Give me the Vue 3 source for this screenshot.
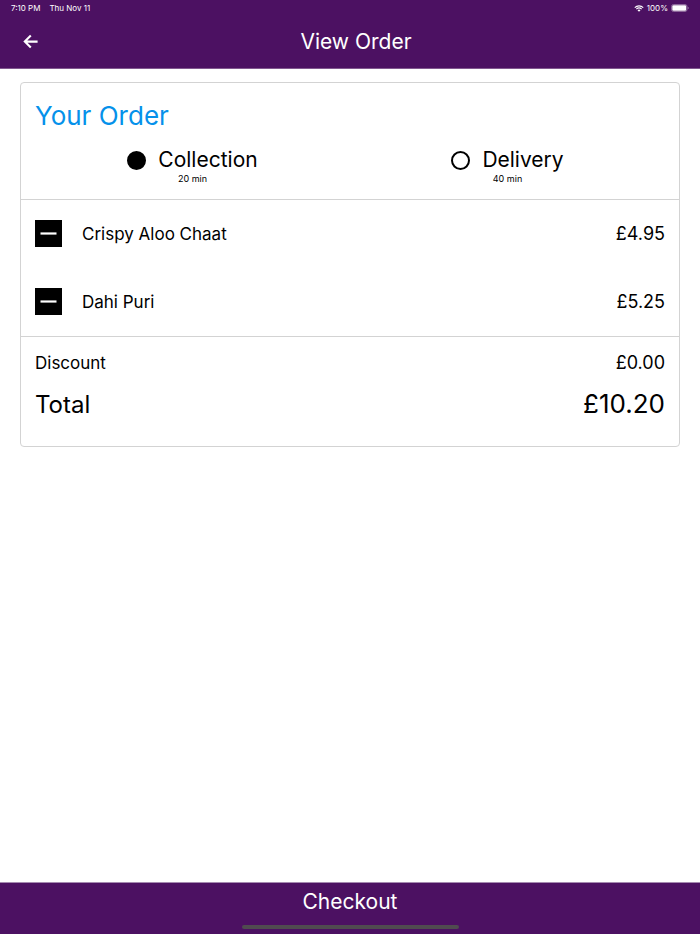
<script setup>
import { computed, ref } from 'vue'

const method = ref('collection')
const methods = [
  { id: 'collection', label: 'Collection', time: '20 min' },
  { id: 'delivery', label: 'Delivery', time: '40 min' },
]
const items = ref([
  { id: 1, name: 'Crispy Aloo Chaat', price: 4.95 },
  { id: 2, name: 'Dahi Puri', price: 5.25 },
])
const discount = ref(0)
const total = computed(() => items.value.reduce((sum, item) => sum + item.price, 0) - discount.value)
const money = (value) => '£' + value.toFixed(2)
const remove = (id) => {
  items.value = items.value.filter((item) => item.id !== id)
}
</script>

<template>
  <div class="screen">
    <header class="top">
      <div class="status">
        <div class="status-side">
          <span>7:10 PM</span>
          <span>Thu Nov 11</span>
        </div>
        <div class="status-side power">
          <svg class="wifi" viewBox="0 0 20 14" aria-hidden="true">
            <path d="M1.5 5.2a12.4 12.4 0 0 1 17 0M4.7 8.3a7.8 7.8 0 0 1 10.6 0" fill="none" stroke="#fff" stroke-width="2.3" />
            <path d="M10 13.5 7 10.6a4.4 4.4 0 0 1 6 0z" fill="#fff" />
          </svg>
          <span>100%</span>
          <svg class="battery" viewBox="0 0 36 16" aria-hidden="true">
            <rect x="1" y="1" width="31" height="14" rx="4" fill="none" stroke="#a78bb3" stroke-width="1.4" />
            <rect x="2.6" y="2.6" width="27.8" height="10.8" rx="2.4" fill="#fff" />
            <path d="M33.6 5.4a2.8 2.8 0 0 1 0 5.2z" fill="#a78bb3" />
          </svg>
        </div>
      </div>
      <nav class="bar">
        <button class="back" type="button" aria-label="Back">
          <svg viewBox="0 0 18 18" aria-hidden="true">
            <path d="M15.6 8.6H3.2M8.8 2.6 2.8 8.6l6 6" fill="none" stroke="#fff" stroke-width="2.1" />
          </svg>
        </button>
        <h1>View Order</h1>
      </nav>
    </header>

    <main class="content">
      <section class="card">
        <div class="intro">
          <h2>Your Order</h2>
          <div class="methods" role="radiogroup" aria-label="Order method">
            <label v-for="m in methods" :key="m.id" class="method">
              <span class="choice">
                <input v-model="method" type="radio" name="method" :value="m.id" />
                <span>{{ m.label }}</span>
              </span>
              <span class="time">{{ m.time }}</span>
            </label>
          </div>
        </div>

        <ul class="items">
          <li v-for="item in items" :key="item.id">
            <button class="minus" type="button" :aria-label="'Remove ' + item.name" @click="remove(item.id)">
              <svg viewBox="0 0 27 27" aria-hidden="true">
                <path d="M5.5 13.5h16" stroke="#fff" stroke-width="2.2" />
              </svg>
            </button>
            <span class="name">{{ item.name }}</span>
            <span>{{ money(item.price) }}</span>
          </li>
        </ul>

        <div class="summary">
          <div class="line">
            <span class="name-text">Discount</span>
            <span>{{ money(discount) }}</span>
          </div>
          <div class="line total">
            <span class="total-text">Total</span>
            <span>{{ money(total) }}</span>
          </div>
        </div>
      </section>
    </main>

    <footer class="bottom">
      <button class="checkout" type="button">Checkout</button>
      <div class="home"></div>
    </footer>
  </div>
</template>

<style>
body {
  margin: 0;
  background: #fff;
}
</style>

<style scoped>
.screen {
  display: flex;
  flex-direction: column;
  min-height: 100vh;
  font-family: Inter, "Liberation Sans", sans-serif;
  font-size: 18px;
  line-height: 24px;
  color: #000;
}
button {
  padding: 0;
  border: 0;
  background: none;
  color: inherit;
  font: inherit;
  cursor: pointer;
}
svg {
  display: block;
}
h1,
h2 {
  margin: 0;
  font-weight: 400;
}
.top {
  background: #4c1162;
  border-bottom: 1px solid #81588f;
  color: #fff;
}
.status {
  display: flex;
  justify-content: space-between;
  padding: 0 11px;
  font-size: 8px;
  line-height: 16px;
}
.status-side {
  display: flex;
  align-items: center;
  gap: 9px;
}
.power {
  gap: 3px;
}
.wifi {
  width: 10px;
  height: 7px;
}
.battery {
  width: 18px;
  height: 8px;
}
.bar {
  display: flex;
  align-items: center;
  height: 52px;
  padding: 0 28px 0 22px;
}
.back,
.back svg {
  width: 18px;
  height: 18px;
}
h1 {
  flex: 1;
  font-size: 21px;
  text-align: center;
}
.content {
  flex: 1;
  padding: 13px 20px;
}
.card {
  border: 1px solid #d3d3d3;
  border-radius: 4px;
}
.intro {
  padding: 15px 14px 13px;
}
h2 {
  color: #0591ea;
  font-size: 26px;
  line-height: 36px;
}
.methods {
  display: grid;
  grid-template-columns: 1fr 1fr;
  padding-top: 14px;
}
.method {
  display: flex;
  flex-direction: column;
  align-items: center;
  cursor: pointer;
}
.choice {
  display: flex;
  align-items: center;
  gap: 12px;
  font-size: 21px;
}
.choice input {
  appearance: none;
  box-sizing: border-box;
  width: 19px;
  height: 19px;
  margin: 0;
  border: 2px solid #000;
  border-radius: 50%;
}
.choice input:checked {
  background: #000;
}
.time {
  font-size: 9px;
  line-height: 14px;
}
.items {
  margin: 0;
  padding: 0;
  border: solid #d3d3d3;
  border-width: 1px 0;
  list-style: none;
}
.items li {
  display: flex;
  align-items: flex-start;
  padding: 20px 14px;
  line-height: 28px;
}
.minus {
  width: 27px;
  height: 27px;
  background: #000;
}
.name {
  flex: 1;
  padding-left: 20px;
  font-size: 17px;
}
.summary {
  padding: 14px 14px 22px;
}
.line {
  display: flex;
  align-items: baseline;
  justify-content: space-between;
}
.name-text {
  font-size: 17px;
}
.total {
  padding-top: 10px;
  font-size: 26px;
  line-height: 38px;
}
.total-text {
  font-size: 24px;
}
.bottom {
  display: flex;
  flex-direction: column;
  align-items: center;
  gap: 4px;
  padding-bottom: 5px;
  border-top: 1px solid #a58ab0;
  background: #4c1162;
  color: #fff;
}
.checkout {
  width: 100%;
  height: 38px;
  font-size: 21px;
}
.home {
  width: 31%;
  height: 4px;
  border-radius: 2px;
  background: #504b50;
}
</style>
